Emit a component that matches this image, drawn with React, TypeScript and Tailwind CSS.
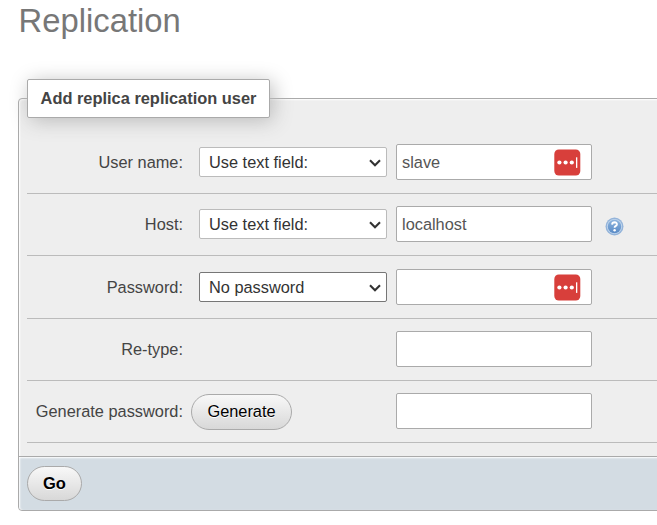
import type { ReactNode } from "react";

function Chevron() {
  return (
    <svg className="mt-[2px]" width="12" height="8" viewBox="0 0 12 8" fill="none" stroke="#333" strokeWidth="2.1">
      <path d="M1 1.2 L6 6.2 L11 1.2" />
    </svg>
  );
}

function Select({ label, focused = false }: { label: string; focused?: boolean }) {
  return (
    <div
      className={
        "flex h-[30px] w-[188px] items-center justify-between rounded-[2px] border bg-white pr-[5px] pl-[9px] text-[#333] " +
        (focused ? "border-[#767676]" : "border-[#bbb]")
      }
    >
      <span className="pb-px">{label}</span>
      <Chevron />
    </div>
  );
}

function PasswordManagerIcon() {
  return (
    <svg width="27" height="27" viewBox="0 0 27 27">
      <rect x="0.3" y="0.5" width="26" height="26" rx="4.5" fill="#d83f3b" />
      <circle cx="5.4" cy="13.5" r="2.1" fill="#fff" />
      <circle cx="11.6" cy="13.5" r="2.1" fill="#fff" />
      <circle cx="17.8" cy="13.5" r="2.1" fill="#fff" />
      <rect x="22" y="8.3" width="1.3" height="10.6" fill="#fff" />
    </svg>
  );
}

function Field({ value = "", manager = false }: { value?: string; manager?: boolean }) {
  return (
    <div className="flex h-9 w-[196px] items-center justify-between rounded-[2px] border border-[#aaa] bg-white pr-[10px] pl-[5px] text-[#555]">
      <span className="pb-px">{value}</span>
      {manager && <PasswordManagerIcon />}
    </div>
  );
}

function HelpIcon() {
  return (
    <svg width="19" height="19" viewBox="0 0 19 19">
      <defs>
        <linearGradient id="help" x1="0" y1="0" x2="0" y2="1">
          <stop offset="0" stopColor="#8db4de" />
          <stop offset="1" stopColor="#5a8bc6" />
        </linearGradient>
      </defs>
      <circle cx="9.5" cy="9.5" r="9" fill="#94b4da" />
      <circle cx="9.5" cy="9.5" r="7.6" fill="#c3d7ed" />
      <circle cx="9.5" cy="9.5" r="6.7" fill="url(#help)" />
      <path d="M7.1 7.6 Q7.2 5.3 9.6 5.3 Q12 5.4 11.9 7.4 Q11.8 8.5 10.5 9.2 Q9.6 9.7 9.6 10.8" fill="none" stroke="#fff" strokeWidth="1.9" />
      <circle cx="9.6" cy="13.2" r="1.2" fill="#fff" />
    </svg>
  );
}

function Row({ label, tall = false, control, children }: { label: string; tall?: boolean; control?: ReactNode; children: ReactNode }) {
  return (
    <div className={"flex items-center border-b border-[#bbb] " + (tall ? "h-[63px]" : "h-[62px]")}>
      <div className={"w-[156px] shrink-0 text-right whitespace-nowrap text-[#444] " + (tall ? "pb-px" : "pb-[2px]")}>{label}</div>
      <div className="flex w-[213px] shrink-0">{control}</div>
      <div className={"flex items-center " + (tall ? "" : "-mt-px")}>{children}</div>
    </div>
  );
}

const button =
  "flex items-center justify-center rounded-[20px] border border-[#aaa] bg-linear-to-b from-[#f8f8f8] to-[#d8d8d8] pb-[2px] text-black [text-shadow:0_1px_0_#fff]";

export default function App() {
  return (
    <div className="h-[525px] w-[657px] overflow-hidden bg-white font-['Liberation_Sans',Arial,sans-serif] text-[16.35px] leading-5">
      <h1 className="h-[79px] pl-[18.5px] text-[32.8px] leading-[41px] text-[#777]">Replication</h1>
      <div className="mt-[19px] ml-[18px] h-[413px] w-[660px] rounded-[4px] border border-[#aaa] bg-[#eee] shadow-[inset_1px_1px_2px_#fff]">
        <div className="-mt-[20px] ml-2 flex h-[39px] w-[243px] items-center justify-center rounded-[2px] border border-[#aaa] bg-white pb-[2px] text-[16.4px] font-bold text-[#444] shadow-[3px_3px_20px_#bbb]">
          Add replica replication user
        </div>
        <div className="ml-2 pt-[13px]">
          <Row label="User name:" tall control={<div className="ml-4"><Select label="Use text field:" /></div>}>
            <Field value="slave" manager />
          </Row>
          <Row label="Host:" control={<div className="-mt-px ml-4"><Select label="Use text field:" /></div>}>
            <Field value="localhost" />
            <div className="mt-[4px] ml-[13px]"><HelpIcon /></div>
          </Row>
          <Row label="Password:" tall control={<div className="ml-4"><Select label="No password" focused /></div>}>
            <Field manager />
          </Row>
          <Row label="Re-type:">
            <Field />
          </Row>
          <Row label="Generate password:" control={<button className={button + " ml-2 h-9 w-[101px]"}>Generate</button>}>
            <Field />
          </Row>
        </div>
        <div className="mt-[13px] flex h-[54px] items-center rounded-bl-[4px] border-t border-[#aaa] bg-[#d3dce3] pl-2 shadow-[inset_1px_1px_2px_#fff]">
          <button className={button + " h-[35px] w-[55px] text-[16.5px] font-bold"}>Go</button>
        </div>
      </div>
    </div>
  );
}
